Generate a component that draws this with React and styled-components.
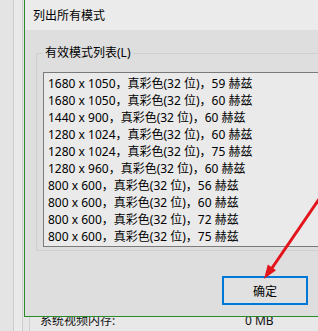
import React from 'react';
import styled, { createGlobalStyle } from 'styled-components';

const GlobalStyle = createGlobalStyle`
  html, body {
    margin: 0;
    padding: 0;
    background: #e4e4e4;
    overflow: hidden;
  }
  body {
    font-family: "Noto Sans", "Noto Sans CJK SC", sans-serif;
    font-size: 12px;
    color: #000;
  }
`;

const modes = [
  ['1680 x 1050', 59],
  ['1680 x 1050', 60],
  ['1440 x 900', 60],
  ['1280 x 1024', 60],
  ['1280 x 1024', 75],
  ['1280 x 960', 60],
  ['800 x 600', 56],
  ['800 x 600', 60],
  ['800 x 600', 72],
  ['800 x 600', 75],
];

const Desktop = styled.div`
  position: relative;
  width: 318px;
  height: 331px;
  overflow: hidden;
`;

const BackWindow = styled.div`
  display: flex;
  height: 100%;
  background: #e4e4e4;
`;

const Strip = styled.div`
  width: ${p => p.w}px;
  flex: none;
  background: ${p => p.bg || '#e4e4e4'};
  border-right: 1px solid #cdcdcd;
`;

const BackPanel = styled.div`
  flex: 1;
  display: flex;
  flex-direction: column;
  justify-content: flex-end;
  padding: 0 0 2px 10px;
  background: #e8e8e8;
`;

const InfoRow = styled.div`
  display: flex;
  line-height: 16px;
  color: #111;
`;

const InfoLabel = styled.span`
  width: 205px;
`;

const Dialog = styled.div`
  position: absolute;
  left: 24px;
  top: 0;
  width: 420px;
  height: 317px;
  box-sizing: border-box;
  display: flex;
  flex-direction: column;
  border: 1px solid #2b8a2b;
  border-top: none;
  background: #dedede;
`;

const TitleBar = styled.div`
  height: 30px;
  flex: none;
  display: flex;
  align-items: center;
  padding-left: 8px;
  background: #ebebeb;
  font-size: 12px;
`;

const Body = styled.div`
  flex: 1;
  padding: 15px 0 0 11px;
`;

const Group = styled.fieldset`
  margin: 0;
  padding: 11px 3px 3px 6px;
  border: 1px solid #cfcfcf;
`;

const Legend = styled.legend`
  padding: 0 2px;
  line-height: 16px;
  font-size: 12px;
`;

const ModeList = styled.div`
  height: 175px;
  box-sizing: border-box;
  padding-top: 2px;
  padding-left: 4px;
  border: 1px solid #7a7a7a;
  background: #eaeaea;
`;

const ModeRow = styled.div`
  height: 17px;
  line-height: 17px;
  white-space: nowrap;
`;

const Footer = styled.div`
  display: flex;
  margin-top: 25px;
  padding-left: 186px;
`;

const Button = styled.button`
  width: 86px;
  height: 29px;
  box-sizing: border-box;
  border: 2px solid #0078d7;
  background: #e1e1e1;
  font-family: inherit;
  font-size: 12px;
  color: #000;
  padding: 0;
`;

const Overlay = styled.svg`
  position: absolute;
  left: 0;
  top: 0;
  pointer-events: none;
`;

export default function App() {
  return (
    <>
      <GlobalStyle />
      <Desktop>
        <BackWindow>
          <Strip w={13} />
          <Strip w={8} bg="#eaeaea" />
          <Strip w={6} bg="#e6e6e6" />
          <BackPanel>
            <InfoRow>
              <InfoLabel>系统视频内存:</InfoLabel>
              <span>0 MB</span>
            </InfoRow>
          </BackPanel>
        </BackWindow>

        <Dialog>
          <TitleBar>列出所有模式</TitleBar>
          <Body>
            <Group>
              <Legend>有效模式列表(L)</Legend>
              <ModeList>
                {modes.map(([res, hz], i) => (
                  <ModeRow key={i}>{res}，真彩色(32 位)，{hz} 赫兹</ModeRow>
                ))}
              </ModeList>
            </Group>
            <Footer>
              <Button>确定</Button>
            </Footer>
          </Body>
        </Dialog>

        <Overlay width="318" height="331">
          <line x1="332" y1="180" x2="270" y2="271" stroke="#e3141b" strokeWidth="3" />
          <polygon points="264,279 276,270.3 267.8,264.6" fill="#e3141b" />
        </Overlay>
      </Desktop>
    </>
  );
}
